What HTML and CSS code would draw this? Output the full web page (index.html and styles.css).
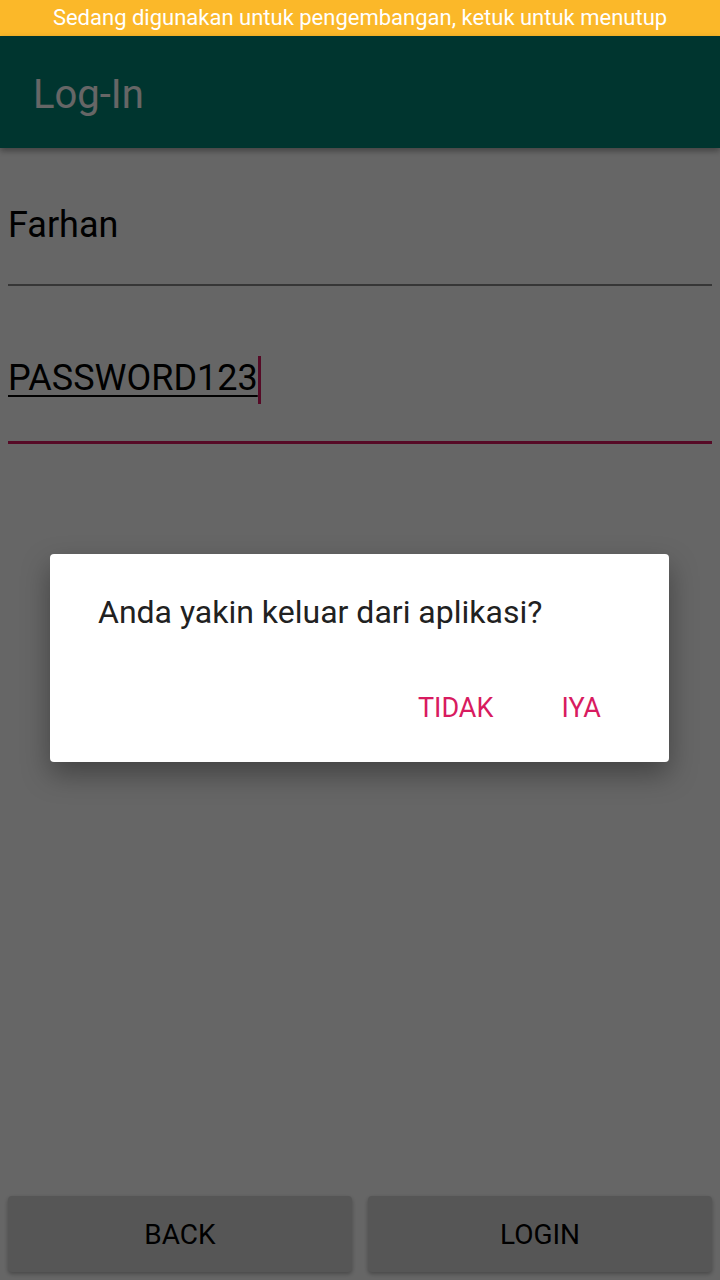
FILE: index.html
```html
<!DOCTYPE html>
<html>
<head>
<meta charset="utf-8">
<link rel="stylesheet" href="styles.css">
</head>
<body>
<div class="screen">
  <div class="devbar">Sedang digunakan untuk pengembangan, ketuk untuk menutup</div>
  <div class="app">
    <header class="appbar"><span class="title">Log-In</span></header>
    <main class="form">
      <div class="field">
        <span class="value">Farhan</span>
      </div>
      <div class="field focused">
        <span class="value composing">PASSWORD123</span><span class="cursor"></span>
      </div>
    </main>
    <footer class="actions">
      <div class="btn">BACK</div>
      <div class="btn">LOGIN</div>
    </footer>
    <div class="scrim"></div>
    <div class="dialog">
      <p class="msg">Anda yakin keluar dari aplikasi?</p>
      <div class="dbtns">
        <span class="dbtn">TIDAK</span>
        <span class="dbtn">IYA</span>
      </div>
    </div>
  </div>
</div>
</body>
</html>
```
FILE: styles.css
```css
* { box-sizing: border-box; }
html, body { margin: 0; padding: 0; }
body { width: 720px; height: 1280px; overflow: hidden; font-family: Roboto, "Noto Sans", sans-serif; background: #fff; }
.screen { width: 720px; height: 1280px; display: flex; flex-direction: column; }
.devbar {
  height: 36px; background: #fbb829; color: #fff;
  font-size: 22px; line-height: 36px; text-align: center; letter-spacing: 0;
  flex: none;
}
.app { position: relative; flex: 1; display: flex; flex-direction: column; background: #fff; }
.appbar {
  height: 112px; background: #008577; display: flex; align-items: center;
  padding-left: 33px; padding-top: 4px; box-shadow: 0 3px 6px rgba(0,0,0,0.35); position: relative; z-index: 1; flex: none;
}
.title { color: #fff; font-size: 40px; }
.form { flex: 1; padding: 0 8px; }
.field {
  height: 138px; border-bottom: 2px solid #888; display: flex; align-items: flex-end;
  color: #000; font-size: 36px; position: relative;
}
.field:first-child { height: 138px; padding-bottom: 41px; }
.field.focused { height: 158px; border-bottom: 3px solid #d81b60; padding-bottom: 45px; }
.value { line-height: 1; }
.composing { text-decoration: underline; text-decoration-thickness: 2px; text-underline-offset: 5px; }
.cursor { display: inline-block; width: 3px; height: 48px; background: #d81b60; margin-left: 0; margin-bottom: -8px; align-self: flex-end; }
.actions { display: flex; gap: 16px; padding: 0 8px 8px; }
.btn {
  flex: 1; height: 76px; background: #d6d7d7; border-radius: 4px;
  display: flex; align-items: center; justify-content: center;
  font-size: 28px; color: #000; box-shadow: 0 2px 4px rgba(0,0,0,0.3);
}
.scrim { position: absolute; inset: 0; background: rgba(0,0,0,0.6); z-index: 2; }
.dialog {
  position: absolute; left: 50px; top: 518px; width: 619px; height: 208px;
  background: #fff; border-radius: 4px; z-index: 3;
  box-shadow: 0 12px 28px rgba(0,0,0,0.35);
  padding: 0 68px 0 48px; display: flex; flex-direction: column;
}
.msg { margin: 0; padding-top: 40px; font-size: 32px; color: #212121; line-height: 36px; }
.dbtns { margin-top: auto; margin-bottom: 38px; display: flex; justify-content: flex-end; gap: 68px; }
.dbtn { color: #d81b60; font-size: 27px; line-height: 32px; }
```
